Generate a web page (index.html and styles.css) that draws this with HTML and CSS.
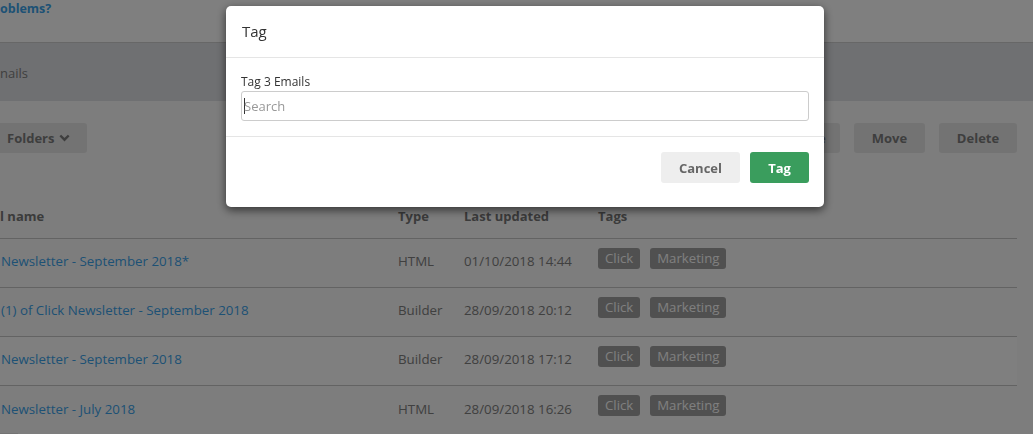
FILE: index.html
```html
<!DOCTYPE html>
<html>
<head>
<meta charset="utf-8">
<link rel="stylesheet" href="styles.css">
</head>
<body>
<div class="page">
  <div class="topbar"><a class="help">oblems?</a></div>
  <div class="subbar"><span class="crumb">nails</span></div>
  <div class="toolbar">
    <button class="btn btn-folders">Folders
      <svg class="chev" width="11" height="8" viewBox="0 0 11 8"><path d="M1.3 1.5 L5.5 5.7 L9.7 1.5" fill="none" stroke="currentColor" stroke-width="2.4"/></svg>
    </button>
    <div class="toolbar-right">
      <button class="btn btn-hidden">Archive</button>
      <button class="btn btn-move">Move</button>
      <button class="btn btn-delete">Delete</button>
    </div>
  </div>
  <div class="table">
    <div class="row head">
      <div class="c-name">l name</div>
      <div class="c-type">Type</div>
      <div class="c-date">Last updated</div>
      <div class="c-tags">Tags</div>
    </div>
    <div class="row">
      <div class="c-name"><a class="link">Newsletter - September 2018*</a></div>
      <div class="c-type">HTML</div>
      <div class="c-date">01/10/2018 14:44</div>
      <div class="c-tags"><span class="badge">Click</span><span class="badge">Marketing</span></div>
    </div>
    <div class="row">
      <div class="c-name"><a class="link">(1) of Click Newsletter - September 2018</a></div>
      <div class="c-type">Builder</div>
      <div class="c-date">28/09/2018 20:12</div>
      <div class="c-tags"><span class="badge">Click</span><span class="badge">Marketing</span></div>
    </div>
    <div class="row hover">
      <div class="c-name"><a class="link">Newsletter - September 2018</a></div>
      <div class="c-type">Builder</div>
      <div class="c-date">28/09/2018 17:12</div>
      <div class="c-tags"><span class="badge">Click</span><span class="badge">Marketing</span></div>
    </div>
    <div class="row last">
      <div class="c-name"><a class="link">Newsletter - July 2018</a></div>
      <div class="c-type">HTML</div>
      <div class="c-date">28/09/2018 16:26</div>
      <div class="c-tags"><span class="badge">Click</span><span class="badge">Marketing</span></div>
    </div>
  </div>
  <div class="pager"><span class="pg"></span></div>
</div>

<div class="backdrop"></div>

<div class="modal">
  <div class="modal-header">Tag</div>
  <div class="modal-body">
    <label class="field-label">Tag 3 Emails</label>
    <div class="input"><span class="caret"></span><span class="placeholder">Search</span></div>
  </div>
  <div class="modal-footer">
    <button class="mbtn mbtn-cancel">Cancel</button>
    <button class="mbtn mbtn-tag">Tag</button>
  </div>
</div>
</body>
</html>
```

FILE: styles.css
```css
* { box-sizing: border-box; }
html, body { margin: 0; padding: 0; }
body {
  font-family: "Open Sans", "Liberation Sans", sans-serif;
  font-size: 13px;
  color: #7a7a7a;
  background: #fafafa;
  width: 1033px;
  height: 434px;
  overflow: hidden;
}
.page { width: 1033px; }
.topbar {
  height: 43px;
  background: #ffffff;
  border-bottom: 1px solid #cfcfcf;
}
.help {
  display: block;
  font-weight: 700;
  font-size: 12.5px;
  line-height: 17px;
  color: #3aa3ea;
}
.subbar {
  height: 58px;
  background: #dfe1e5;
  display: flex;
  align-items: center;
  padding-top: 2px;
}
.crumb { font-size: 13px; color: #808080; }
.toolbar {
  display: flex;
  justify-content: space-between;
  padding: 22px 16px 0 0;
  height: 101px;
}
.btn {
  height: 30px;
  border: none;
  border-radius: 3px;
  background: #e7e7e7;
  color: #7c7c7c;
  font-family: "Open Sans", "Liberation Sans", sans-serif;
  font-weight: 700;
  font-size: 13px;
  padding: 0 14px;
}
.btn-folders {
  display: flex;
  align-items: center;
  gap: 5px;
  width: 87px;
  padding-left: 7px;
  border-radius: 0 3px 3px 0;
}
.chev { color: #7c7c7c; }
.toolbar-right { display: flex; gap: 14px; }
.btn-hidden { width: 78px; }
.btn-move { width: 71px; }
.btn-delete { width: 78px; }
.table { width: 1017px; }
.row {
  display: grid;
  grid-template-columns: 398px 66px 134px 1fr;
  height: 49px;
  border-bottom: 1px solid #c6c6c6;
  align-items: center;
  color: #808080;
  font-size: 13.3px;
  padding-bottom: 4px;
}
.row.head {
  height: 37px;
  font-weight: 700;
  color: #767676;
  align-items: start;
  padding: 5px 0 0;
  font-size: 13px;
}
.row.hover { background: #ffffff; }
.row.last { border-bottom: none; }
.c-name { white-space: nowrap; overflow: hidden; }
.link { color: #3aa3ea; padding-left: 1px; }
.c-tags { display: flex; gap: 10px; }
.row:not(.head) .c-tags { margin-top: -6px; }
.badge {
  background: #a0a0a0;
  color: #ffffff;
  border-radius: 3px;
  padding: 0 7px;
  line-height: 21px;
  font-size: 13.2px;
}
.pg { display: block; width: 18px; height: 4px; background: #e7e7e7; margin-top: -2px; }

.backdrop {
  position: fixed;
  inset: 0;
  background: rgba(0, 0, 0, 0.5);
}
.modal {
  position: fixed;
  left: 226px;
  top: 6px;
  width: 598px;
  background: #fff;
  border-radius: 5px;
  box-shadow: 0 3px 10px rgba(0, 0, 0, 0.6);
  color: #333;
}
.modal-header {
  padding: 15px 16px;
  font-size: 15px;
  line-height: 21px;
  border-bottom: 1px solid #e5e5e5;
  color: #333;
}
.modal-body {
  padding: 15px;
  border-bottom: 1px solid #e5e5e5;
}
.field-label {
  display: block;
  font-size: 12px;
  line-height: 17px;
  margin-bottom: 1px;
  color: #333;
}
.input {
  height: 30px;
  border: 1px solid #cccccc;
  border-radius: 3px;
  display: flex;
  align-items: center;
  padding-left: 2px;
}
.caret { width: 1px; height: 16px; background: #333; }
.placeholder { color: #999; font-size: 13px; margin-left: -1px; }
.modal-footer {
  display: flex;
  justify-content: flex-end;
  gap: 10px;
  padding: 15px 15px 24px;
}
.mbtn {
  height: 31px;
  border: none;
  border-radius: 3px;
  font-family: "Open Sans", "Liberation Sans", sans-serif;
  font-weight: 700;
  font-size: 13px;
}
.mbtn-cancel { width: 79px; background: #eeeeee; color: #666; }
.mbtn-tag { width: 59px; background: #3a9d5d; color: #fff; }
```
